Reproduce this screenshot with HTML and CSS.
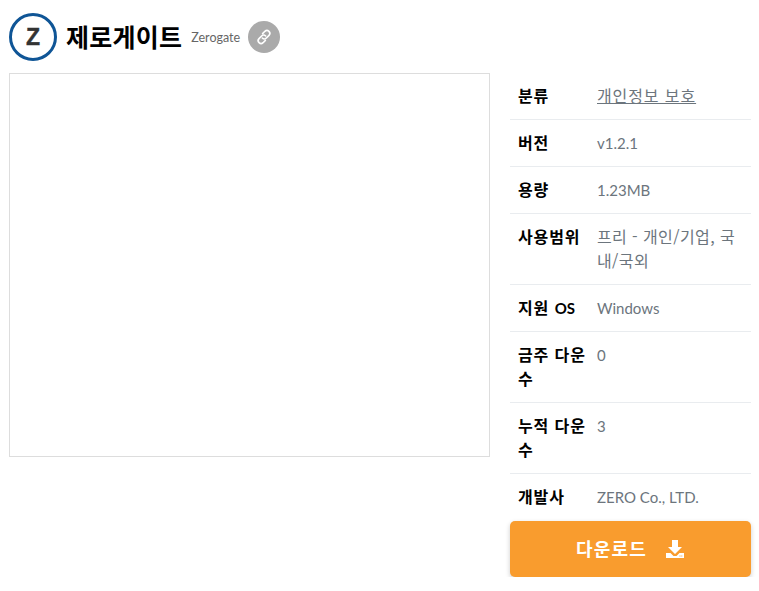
FILE: index.html
```html
<!DOCTYPE html>
<html lang="ko">
<head>
  <meta charset="UTF-8" />
  <title>제로게이트</title>
  <link rel="stylesheet" href="styles.css">
</head>
<body>

<header class="app-head">
  <svg class="logo" width="48" height="48" viewBox="0 0 48 48">
    <circle cx="24" cy="24" r="22.5" fill="#fff" stroke="#0f5596" stroke-width="3"/>
    <text x="24" y="32" text-anchor="middle" class="logo-z">Z</text>
  </svg>
  <h1>제로게이트</h1>
  <span class="sub">Zerogate</span>
  <a class="link-btn" href="#">
    <svg width="18" height="18" viewBox="0 0 18 18" fill="none" stroke="#fff" stroke-width="1.6" stroke-linecap="round">
      <path d="M7.6 5.6 9.9 3.3a2.9 2.9 0 0 1 4.1 4.1l-2.6 2.6a2.9 2.9 0 0 1-4.1 0"/>
      <path d="M10.4 12.4 8.1 14.7A2.9 2.9 0 0 1 4 10.6l2.6-2.6a2.9 2.9 0 0 1 4.1 0"/>
    </svg>
  </a>
</header>

<main class="content">
  <div class="preview"></div>

  <aside class="side">
    <table class="info">
      <tr><th>분류</th><td><a href="#">개인정보 보호</a></td></tr>
      <tr><th>버전</th><td class="latin">v1.2.1</td></tr>
      <tr><th>용량</th><td class="latin">1.23MB</td></tr>
      <tr><th>사용범위</th><td class="range">프리 - 개인/기업, 국내/국외</td></tr>
      <tr><th>지원 <span class="latin">OS</span></th><td class="latin">Windows</td></tr>
      <tr><th>금주 다운수</th><td class="latin">0</td></tr>
      <tr><th>누적 다운수</th><td class="latin">3</td></tr>
      <tr><th>개발사</th><td class="latin">ZERO Co., LTD.</td></tr>
    </table>
    <a class="download" href="#">
      <span class="download-label">다운로드</span>
      <svg width="20" height="20" viewBox="0 0 20 20" fill="#fff">
        <path d="M7 1h6v7h4l-7 7-7-7h4z"/>
        <path d="M1 14h4.5l3 3h3l3-3H19v5H1z"/>
        <path d="M14.5 16.6h1v.8h-1zM16.3 16.6h1v.8h-1z" fill="#f99c2e"/>
      </svg>
    </a>
  </aside>
</main>

</body>
</html>
```

FILE: styles.css
```css
* {
  box-sizing: border-box;
}

body {
  margin: 0;
  padding: 13px 8px 0 9px;
  font-family: "Noto Sans CJK KR", "Noto Sans", sans-serif;
  background: #fff;
  color: #000;
}

.app-head {
  display: flex;
  align-items: center;
  height: 48px;
  margin-bottom: 12px;
}

.logo-z {
  font-family: "Liberation Sans", sans-serif;
  font-size: 23px;
  font-weight: 700;
  fill: #333;
  stroke: #333;
  stroke-width: 0.4px;
}

.app-head h1 {
  margin: 0 0 2px 9px;
  font-size: 25px;
  font-weight: 700;
  letter-spacing: 0.25px;
  line-height: 46px;
}

.sub {
  margin-left: 9px;
  font-family: "Lato", sans-serif;
  font-size: 12.5px;
  color: #666;
}

.link-btn {
  display: flex;
  align-items: center;
  justify-content: center;
  width: 32px;
  height: 32px;
  margin-left: 8px;
  border-radius: 50%;
  background: #aaa;
}

.content {
  display: flex;
  align-items: flex-start;
  gap: 20px;
}

.preview {
  width: 481px;
  height: 384px;
  border: 1px solid #ddd;
}

.side {
  width: 241px;
}

.info {
  width: 100%;
  margin-bottom: 1px;
  border-collapse: collapse;
  table-layout: fixed;
  font-size: 16px;
  letter-spacing: 0.9px;
  line-height: 24px;
}

.info tr {
  border-bottom: 1px solid #e9ecef;
}

.info tr:last-child {
  border-bottom: 0;
}

.info th,
.info td {
  padding: 10px 7px 12px 8px;
  text-align: left;
  vertical-align: top;
}

.info th {
  width: 87px;
  font-weight: 700;
}

.info td {
  padding-left: 0;
  color: #6c757d;
}

.info a {
  color: #6c757d;
}

.info .range {
  letter-spacing: 0.4px;
}

.info .latin {
  padding-top: 11px;
  padding-bottom: 11px;
  font-family: "Lato", sans-serif;
  font-size: 15px;
  letter-spacing: 0;
}

.info th .latin {
  line-height: 1;
}

.download {
  display: flex;
  align-items: center;
  justify-content: center;
  gap: 18px;
  height: 56px;
  border-radius: 5px;
  background: #f99c2e;
  box-shadow: 0 2px 5px rgba(0, 0, 0, 0.2);
  color: #fff;
  font-size: 18px;
  font-weight: 700;
  letter-spacing: 1.2px;
  text-decoration: none;
}

.download-label {
  margin-bottom: 2px;
}
```
